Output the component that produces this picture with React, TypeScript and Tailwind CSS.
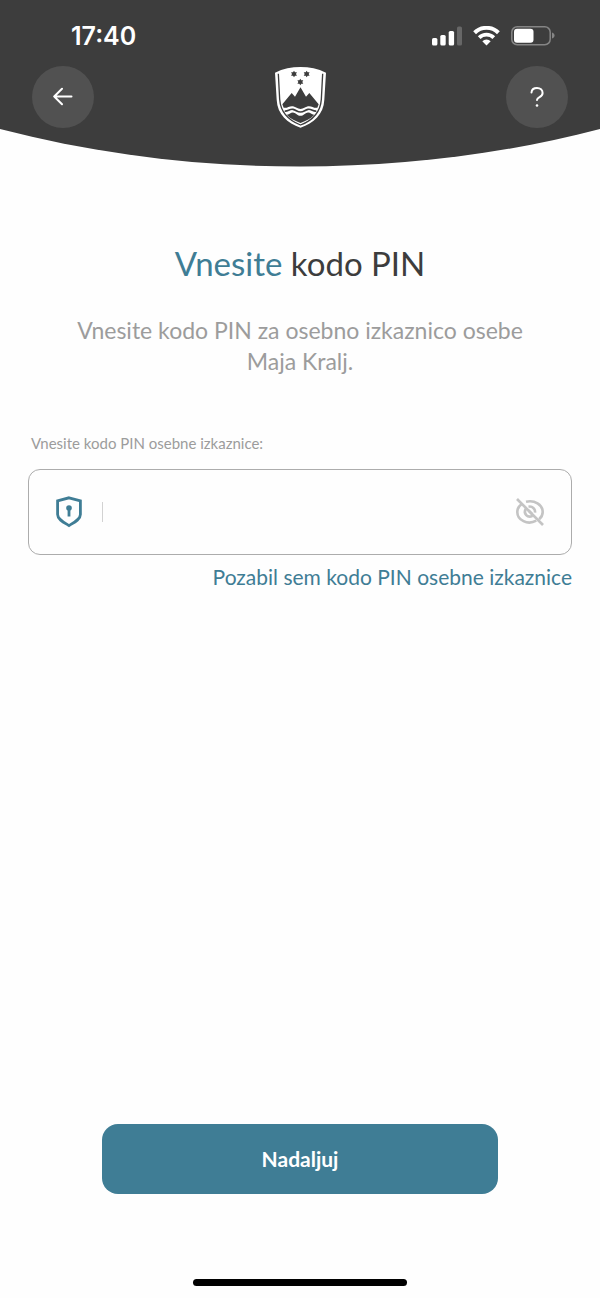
import { useState } from "react";

function StatusBar() {
  return (
    <div className="flex h-16 items-center justify-between pt-2 pr-[45px] pl-[71px]">
      <span className="font-[Inter,sans-serif] text-[25px] leading-8 font-semibold">17:40</span>
      <div className="flex items-center gap-[11px]">
        <svg className="h-5 w-[31px]" viewBox="0 0 31 20" fill="currentColor" aria-hidden>
          <rect x="1" y="12" width="5.4" height="7.5" rx="1.6" />
          <rect x="9.3" y="9" width="5.4" height="10.5" rx="1.6" />
          <rect x="17.7" y="5" width="5.4" height="14.5" rx="1.6" />
          <rect x="26" y="0.6" width="5" height="18.9" rx="1.6" opacity="0.22" />
        </svg>
        <svg className="h-5 w-[27px]" viewBox="0 0 27 20" fill="none" stroke="currentColor" aria-hidden>
          <path d="M1.6 6.7a17 17 0 0 1 23.8 0" strokeWidth="4" />
          <path d="M6.2 11.6a10.4 10.4 0 0 1 14.6 0" strokeWidth="3.8" />
          <path d="M13.5 19.600l-4.200-4.300a6 6 0 0 1 8.400 0z" fill="currentColor" stroke="none" />
        </svg>
        <svg className="h-5 w-11" viewBox="0 0 44 20" aria-hidden>
          <rect x="0.8" y="0.8" width="38.4" height="17.9" rx="5.4" fill="none" stroke="#858585" strokeWidth="1.5" />
          <rect x="3" y="2.8" width="19.5" height="14" rx="3" fill="currentColor" />
          <path d="M41 6.500c3.400 1 3.400 5 0 6z" fill="#858585" />
        </svg>
      </div>
    </div>
  );
}

function Star({ x, y }: { x: number; y: number }) {
  return (
    <path
      transform={`translate(${x} ${y})`}
      d="M0-10l3 5h5.800L6 0l2.800 5H3L0 10l-3-5h-5.800L-6 0l-2.800-5h5.800z"
    />
  );
}

function CoatOfArms() {
  return (
    <svg className="h-[61px] w-[51px]" viewBox="0 0 153 183" fill="#3d3d3d" role="img" aria-label="Grb Republike Slovenije">
      <path
        fill="#fff"
        d="M0 17C24 5 50 0 76.500 0S129 5 153 17L148 98C146 142 116 168 76.500 182C37 168 7 142 5 98Z"
      />
      <path
        fill="none"
        stroke="#3d3d3d"
        strokeWidth="4"
        d="M10 20L14 97C17 138 42 161 76.500 174C111 161 136 138 139 97L143 20"
      />
      <Star x={57} y={21} />
      <Star x={95} y={21} />
      <Star x={76} y={45} />
      <path d="M22 112L50 78L60 89L76.500 61L93 89L103 78L131 112L127 122C117 125 110 116 99 118C90 120 86 126 76.500 126S63 120 54 118C43 116 36 125 26 122Z" />
      <path
        fill="none"
        stroke="#3d3d3d"
        strokeWidth="5"
        d="M29 132C38 134 44 125 54 127S66 135 76.500 135S89 129 99 127S115 134 124 132"
      />
      <path d="M35 143C44 144 47 135 56 137C65 139 67 146 76.500 146S88 139 97 137C106 135 109 144 118 143C107 155 94 161 76.500 168C59 161 46 155 35 143Z" />
    </svg>
  );
}

const roundButton = "flex size-[62px] items-center justify-center rounded-full bg-[#515151]";

function Header() {
  return (
    <header>
      <div className="bg-[#3d3d3d] text-white">
        <StatusBar />
        <div className="flex items-center justify-between px-8 pt-0.5">
          <button type="button" aria-label="Nazaj" className={roundButton}>
            <svg
              className="size-5"
              viewBox="0 0 20 20"
              fill="none"
              stroke="currentColor"
              strokeWidth="2"
              strokeLinecap="round"
              strokeLinejoin="round"
              aria-hidden
            >
              <path d="M18.500 9.500H1.200M9 1.800L1.200 9.500L9 17.200" />
            </svg>
          </button>
          <CoatOfArms />
          <button type="button" aria-label="Pomoč" className={roundButton}>
            <svg className="h-5 w-4" viewBox="0 0 16 20" fill="none" stroke="currentColor" strokeWidth="2" strokeLinecap="round" aria-hidden>
              <path d="M2.500 5.500C2.700 2.600 5 1 8 1c3.200 0 5.600 2 5.600 5 0 4.300-5.400 3.800-5.600 7" />
              <circle cx="8" cy="18.500" r="1.300" fill="currentColor" stroke="none" />
            </svg>
          </button>
        </div>
      </div>
      <svg className="block h-[39px] w-full" viewBox="0 0 600 39" preserveAspectRatio="none" fill="#3d3d3d" aria-hidden>
        <path d="M0 0H600V1C500 27 400 38.500 300 38.500S100 27 0 1Z" />
      </svg>
    </header>
  );
}

function ShieldLock() {
  return (
    <svg className="h-8 w-[26px] shrink-0" viewBox="0 0 26 32" fill="none" stroke="#3f7d95" strokeWidth="2.8" aria-hidden>
      <path d="M13 1.800L24.400 4.800V18.500C24.400 23.500 18 26.500 13 29.500C8 26.500 1.600 23.500 1.600 18.500V4.800Z" />
      <circle cx="13" cy="12" r="2.8" fill="#3f7d95" stroke="none" />
      <path d="M13 13V20.500" />
    </svg>
  );
}

function EyeOff() {
  return (
    <svg className="size-7" viewBox="0 0 28 28" fill="none" stroke="#c4c4c4" strokeWidth="2.6" aria-hidden>
      <path d="M10 3.700C18.500 1.700 26.700 6.500 26.700 14c0 3-1.400 5.500-3.600 7.300" />
      <path d="M5.500 6.200C2.900 8 1.300 10.800 1.300 14c0 8.200 10.200 13.400 19 8.700" />
      <path d="M9.700 11C7 15.500 11.500 20.500 16.500 17.800" />
      <path d="M12.500 8.700c3.800-.8 7 2.100 6.500 6" />
      <path d="M12.500 12.500l3.500 3.500" />
      <path d="M1 1L27 27" />
    </svg>
  );
}

export default function App() {
  const [pin, setPin] = useState("");
  const [visible, setVisible] = useState(false);

  return (
    <div className="flex min-h-screen flex-col bg-[#fefefe] font-[Lato,sans-serif] text-[#3d3d3d]">
      <Header />

      <main className="flex flex-1 flex-col px-7 pt-[76px]">
        <h1 className="text-center text-[33px] leading-10">
          <span className="text-[#3f7d95]">Vnesite</span> kodo PIN
        </h1>
        <p className="mx-auto mt-8 max-w-[480px] text-center text-[23px] leading-[31px] text-[#9c9c9c]">
          Vnesite kodo PIN za osebno izkaznico osebe Maja Kralj.
        </p>

        <label htmlFor="pin" className="mt-[54px] pl-[3px] text-[15px] leading-6 text-[#9c9c9c]">
          Vnesite kodo PIN osebne izkaznice:
        </label>
        <div className="mt-3.5 flex h-[86px] items-center rounded-xl border border-[#acacac] px-[27px]">
          <ShieldLock />
          <span className="ml-5 h-5 w-px shrink-0 bg-[#d2d2d2]" />
          <input
            id="pin"
            type={visible ? "text" : "password"}
            inputMode="numeric"
            autoComplete="off"
            value={pin}
            onChange={(e) => setPin(e.target.value)}
            className="h-full min-w-0 flex-1 px-2 text-[23px] outline-none"
          />
          <button type="button" aria-label="Prikaži kodo PIN" onClick={() => setVisible((v) => !v)}>
            <EyeOff />
          </button>
        </div>
        <a href="#pozabljen-pin" className="mt-1.5 self-end text-[21px] leading-8 text-[#3f7d95]">
          Pozabil sem kodo PIN osebne izkaznice
        </a>

        <button
          type="submit"
          className="mx-auto mt-auto h-[70px] w-full max-w-[396px] rounded-2xl bg-[#3f7d95] text-[21px] leading-8 font-bold text-white"
        >
          Nadaljuj
        </button>
      </main>

      <footer className="flex justify-center pt-[85px] pb-3">
        <div className="h-[7px] w-[214px] rounded-full bg-black" />
      </footer>
    </div>
  );
}
